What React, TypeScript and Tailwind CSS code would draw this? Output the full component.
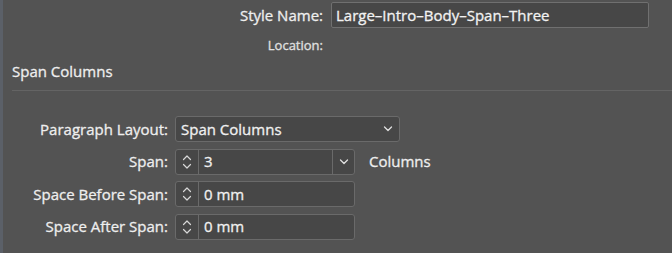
import React from "react";

function StepperIcon() {
	return (
		<svg width="10" height="18" viewBox="0 0 10 18" fill="none" stroke="#d8d8d8" strokeWidth="1.2" strokeLinecap="round" strokeLinejoin="round">
			<title>stepper</title>
			<path d="M1.5 6.5L5 3L8.5 6.5" />
			<path d="M1.5 11.5L5 15L8.5 11.5" />
		</svg>
	);
}

function Chevron() {
	return (
		<svg width="10" height="6" viewBox="0 0 10 6" fill="none" stroke="#e0e0e0" strokeWidth="1.3" strokeLinecap="round" strokeLinejoin="round">
			<title>chevron</title>
			<path d="M1.5 1L5 4.5L8.5 1" />
		</svg>
	);
}

function Label({ children }: { children: React.ReactNode }) {
	return <div className="w-[168px] whitespace-nowrap text-right text-[15px] text-[#eeeeee]">{children}</div>;
}

function Stepper({ value, dropdown }: { value: string; dropdown?: boolean }) {
	return (
		<div className="flex h-[26px] w-[180px] rounded-[3px] border border-[#6a6a6a] bg-[#474747]">
			<div className="flex w-[23px] items-center justify-center border-r border-[#6a6a6a]">
				<StepperIcon />
			</div>
			<div className="flex flex-1 items-center pl-[5px] text-[15px] text-[#f0f0f0]">{value}</div>
			{dropdown && (
				<div className="flex w-[22px] items-center justify-center border-l border-[#6a6a6a]">
					<Chevron />
				</div>
			)}
		</div>
	);
}

export default function App() {
	return (
		<div
			className="relative h-[253px] w-[672px] overflow-hidden bg-[#535353] text-[#eeeeee] [-webkit-text-stroke:0.3px_currentColor]"
			style={{ fontFamily: '"Open Sans", "Noto Sans", sans-serif' }}
		>
			<div className="absolute left-0 top-0 h-full w-[3px] bg-[#5b6068]" />
			<div className="flex items-center pt-[2px]">
				<div className="w-[323px] whitespace-nowrap text-right text-[15px]">Style Name:</div>
				<div className="ml-[8px] flex h-[26px] w-[318px] items-center rounded-[2px] border border-[#707070] bg-[#474747] pl-[4px] text-[15px] text-[#f2f2f2]">
					Large–Intro–Body–Span–Three
				</div>
			</div>
			<div className="mt-[8px] flex">
				<div className="w-[323px] text-right text-[13px] text-[#e0e0e0]">Location:</div>
			</div>
			<div className="mt-[4px] pl-[12px] text-[15px]">Span Columns</div>
			<div className="ml-[12px] mt-[8px] h-[1px] bg-[#646464]" />
			<div className="mt-[25px] flex flex-col gap-[6.5px]">
				<div className="flex items-center gap-[7px]">
					<Label>Paragraph Layout:</Label>
					<div className="flex h-[26px] w-[225px] items-center justify-between rounded-[3px] border border-[#6a6a6a] bg-[#474747] pl-[5px] pr-[6px] text-[15px] text-[#f0f0f0]">
						<span>Span Columns</span>
						<Chevron />
					</div>
				</div>
				<div className="flex items-center gap-[7px]">
					<Label>Span:</Label>
					<Stepper value="3" dropdown />
					<span className="ml-[7px] text-[15px]">Columns</span>
				</div>
				<div className="flex items-center gap-[7px]">
					<Label>Space Before Span:</Label>
					<Stepper value="0 mm" />
				</div>
				<div className="flex items-center gap-[7px]">
					<Label>Space After Span:</Label>
					<Stepper value="0 mm" />
				</div>
			</div>
		</div>
	);
}
